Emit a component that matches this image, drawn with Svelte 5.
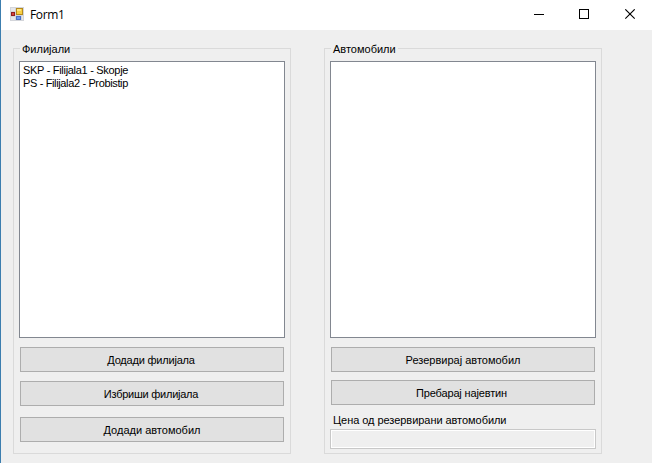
<script>
  const branches = ['SKP - Filijala1 - Skopje', 'PS - Filijala2 - Probistip'];
</script>

<div class="window">
  <header>
    <svg class="logo" width="14" height="14" viewBox="0 0 14 14">
      <rect width="14" height="14" fill="#d3d5da" />
      <rect x="1" y="1" width="4" height="3" fill="#e6e7eb" />
      <rect x="1" y="10" width="4" height="3" fill="#e6e7eb" />
      <rect x="12" y="9" width="1" height="4" fill="#e6e7eb" />
      <rect x="6.5" y="1.5" width="6" height="6" fill="#f8cf45" stroke="#b58a1c" />
      <rect x="7" y="2" width="4" height="2" fill="#ffe684" />
      <rect x="1.5" y="5.5" width="3" height="3" fill="#d9443c" stroke="#8e1f22" />
      <rect x="6.5" y="9.5" width="4" height="3" fill="#6e9bec" stroke="#4a70c8" />
    </svg>
    <span class="title">Form1</span>
    <svg class="controls" width="103" height="12" viewBox="0 0 103 12" fill="none" stroke="#000">
      <path d="M0 5.5H10" shape-rendering="crispEdges" />
      <rect x="45.5" y="0.5" width="9" height="9" shape-rendering="crispEdges" />
      <path d="M91.3 0.3L100.7 9.7M100.7 0.3L91.3 9.7" stroke-width="1.1" />
    </svg>
  </header>

  <main>
    <section class="group">
      <h2>Филијали</h2>
      <ul class="list">
        {#each branches as branch, i}
          <li class:tight={i === 1}>{branch}</li>
        {/each}
      </ul>
      <button class="first add">Додади филијала</button>
      <button class="second remove">Избриши филијала</button>
      <button class="third">Додади автомобил</button>
    </section>

    <section class="group">
      <h2>Автомобили</h2>
      <ul class="list"></ul>
      <button class="first">Резервирај автомобил</button>
      <button class="near search">Пребарај најевтин</button>
      <label for="price">Цена од резервирани автомобили</label>
      <input id="price" disabled />
    </section>
  </main>
</div>

<style>
  :global(body) { margin: 0; overflow: hidden; }
  .window {
    box-sizing: border-box;
    width: 652px;
    height: 463px;
    border-left: 1px solid #3c7eaf;
    background: #efefef;
    color: #000;
    font: 11px/13px "Liberation Sans", Arial, sans-serif;
    white-space: nowrap;
  }
  header {
    box-sizing: border-box;
    height: 30px;
    background: #fff;
    display: flex;
    align-items: flex-start;
    padding: 7px 15px 0 9px;
  }
  .title {
    font: 12px/16px "Open Sans", "Noto Sans", sans-serif;
    letter-spacing: -0.35px;
    margin-left: 6px;
    flex: 1;
  }
  .controls { margin-top: 2px; }
  main { display: flex; gap: 33px; padding: 18px 0 0 12px; }
  .group {
    box-sizing: border-box;
    width: 278px;
    height: 406px;
    border: 1px solid #dadada;
    padding: 0 5px;
    display: flex;
    flex-direction: column;
  }
  h2 {
    align-self: flex-start;
    font: inherit;
    margin: -6px 0 0 1px;
    padding: 0 2px;
    height: 13px;
    background: #efefef;
  }
  .list {
    box-sizing: border-box;
    height: 277px;
    margin: 5px 0 0;
    padding: 2px 3px;
    border: 1px solid #828790;
    background: #fff;
    list-style: none;
    letter-spacing: -0.3px;
  }
  .tight { letter-spacing: -0.36px; }
  button {
    box-sizing: border-box;
    height: 25px;
    margin: 0 1px;
    padding: 1px 0 0;
    border: 1px solid #adadad;
    border-radius: 0;
    background: #e1e1e1;
    color: #000;
    font: inherit;
  }
  .first { margin-top: 9px; }
  .second { margin-top: 9px; }
  .third { margin-top: 11px; }
  .near { margin-top: 8px; }
  .add { letter-spacing: -0.2px; padding-right: 2px; }
  .remove { letter-spacing: -0.25px; padding-right: 2px; }
  .search { letter-spacing: -0.15px; padding-right: 3px; }
  label { margin: 9px 0 0 3px; height: 13px; letter-spacing: -0.05px; }
  input {
    box-sizing: border-box;
    height: 20px;
    margin: 2px 0 0;
    padding: 0;
    border: 1px solid #c8c8c8;
    border-radius: 0;
    background: #efefef;
    box-shadow: inset 0 0 0 1px #fff;
  }
</style>
